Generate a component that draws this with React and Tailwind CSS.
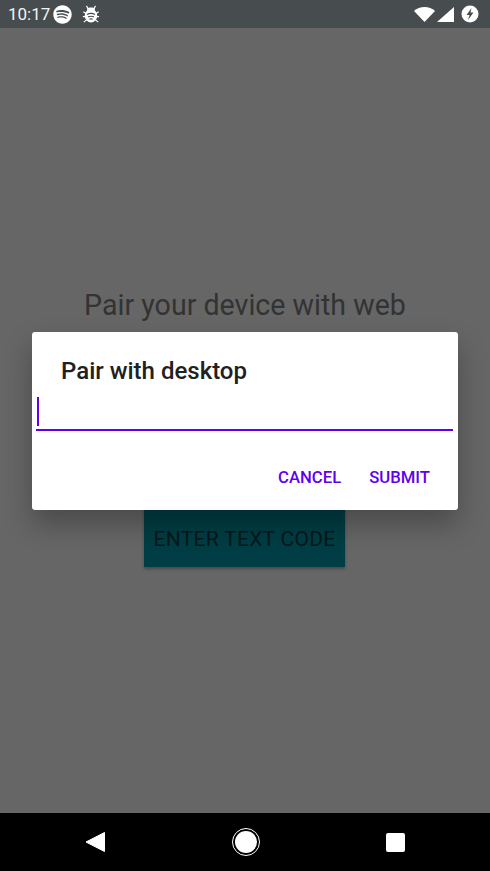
import { FaSpotify } from "react-icons/fa";

const BugIcon = () => (
  <svg width="18" height="20" viewBox="0 0 20 22" fill="none">
    <ellipse cx="10" cy="13" rx="7" ry="7.500" fill="#fff" />
    <path d="M5 2 7.500 6.500M15 2 12.500 6.500M1.500 8.500l3 2M18.500 8.500l-3 2M1 14h2.500M19 14h-2.500M2 20l3-2.500M18 20l-3-2.500" stroke="#fff" strokeWidth="1.300" />
    <path d="M6 4.800C7 3.400 13 3.400 14 4.800L14.500 7.500H5.500Z" fill="#fff" />
    <path d="M5.500 11.500c3-1.500 6-1.500 9 0M6.800 14.200c2.200-1 4.200-1 6.400 0M8.200 16.800c1.200-.5 2.400-.5 3.600 0" stroke="#474c4f" strokeWidth="1.300" />
  </svg>
);

const StatusBar = () => (
  <div className="h-[28px] shrink-0 bg-[#474c4f] flex items-center justify-between pl-[8px] pr-[11px] text-white">
    <div className="flex items-center">
      <span className="text-[17px] leading-none text-[#f2f3f3]">10:17</span>
      <FaSpotify className="ml-[3px] text-[19px] text-white" />
      <span className="ml-[10px] flex"><BugIcon /></span>
    </div>
    <div className="flex items-center">
      <svg width="21" height="15" viewBox="0 0 21 15">
        <path d="M0 4C2.800 1.300 6.500 0 10.500 0S18.200 1.300 21 4L10.500 15Z" fill="#fff" />
      </svg>
      <svg width="17" height="15" viewBox="0 0 17 15" className="ml-[2px]">
        <path d="M0 15 17 0v15Z" fill="#fff" />
      </svg>
      <svg width="18" height="18" viewBox="0 0 18 18" className="ml-[7px]">
        <circle cx="9" cy="9" r="8.500" fill="#fff" />
        <path d="M10.500 3 5.500 10h3l-1.500 5 5.500-7.500h-3Z" fill="#474c4f" />
      </svg>
    </div>
  </div>
);

const NavBar = () => (
  <div className="h-[58px] shrink-0 bg-black flex items-center justify-between px-[85px]">
    <svg width="20" height="22" viewBox="0 0 20 22">
      <path d="M19.500 1.500v19L1 11Z" fill="#fff" stroke="#fff" strokeLinejoin="round" />
    </svg>
    <svg width="28" height="28" viewBox="0 0 28 28">
      <circle cx="14" cy="14" r="13.500" fill="none" stroke="#fff" strokeWidth="1" />
      <circle cx="14" cy="14" r="11" fill="#fff" />
    </svg>
    <div className="w-[19px] h-[19px] bg-white rounded-[2px]" />
  </div>
);

export default function App() {
  return (
    <div className="relative w-[490px] h-[871px] flex flex-col overflow-hidden font-['Roboto',sans-serif]">
      <StatusBar />

      {/* dimmed screen behind the dialog */}
      <main className="flex-1 bg-[#666666] flex flex-col items-center pt-[259px]">
        <h1 className="text-[28.6px] leading-[36px] text-[#333333] font-normal">Pair your device with web</h1>
        <div className="mt-[169px] mr-[1px] w-[201px] h-[75px] bg-[#003d44] flex items-end justify-center pb-[13px] shadow-[0_2px_3px_rgba(0,0,0,0.3)]">
          <span className="text-[21px] leading-[30px] text-[#04181b] tracking-[0.3px]">ENTER TEXT CODE</span>
        </div>
      </main>

      <NavBar />

      {/* dialog */}
      <div className="absolute left-[32px] top-[332px] w-[426px] h-[178px] bg-white rounded-[3px] shadow-[0_14px_28px_rgba(0,0,0,0.28)] flex flex-col">
        <div className="pl-[29px] pt-[24px] text-[24px] leading-[30px] font-medium text-[#212121]">Pair with desktop</div>
        <div className="ml-[4px] mr-[5px] mt-[11px] h-[34px] border-b-2 border-[#6200ee] flex items-start">
          <div className="ml-[1px] w-[2px] h-[29px] bg-[#6200ee]" />
        </div>
        <div className="flex justify-end gap-[28px] pr-[28px] pt-[36px] text-[16.7px] leading-[22px] font-medium text-[#6200ee]">
          <span>CANCEL</span>
          <span>SUBMIT</span>
        </div>
      </div>
    </div>
  );
}
